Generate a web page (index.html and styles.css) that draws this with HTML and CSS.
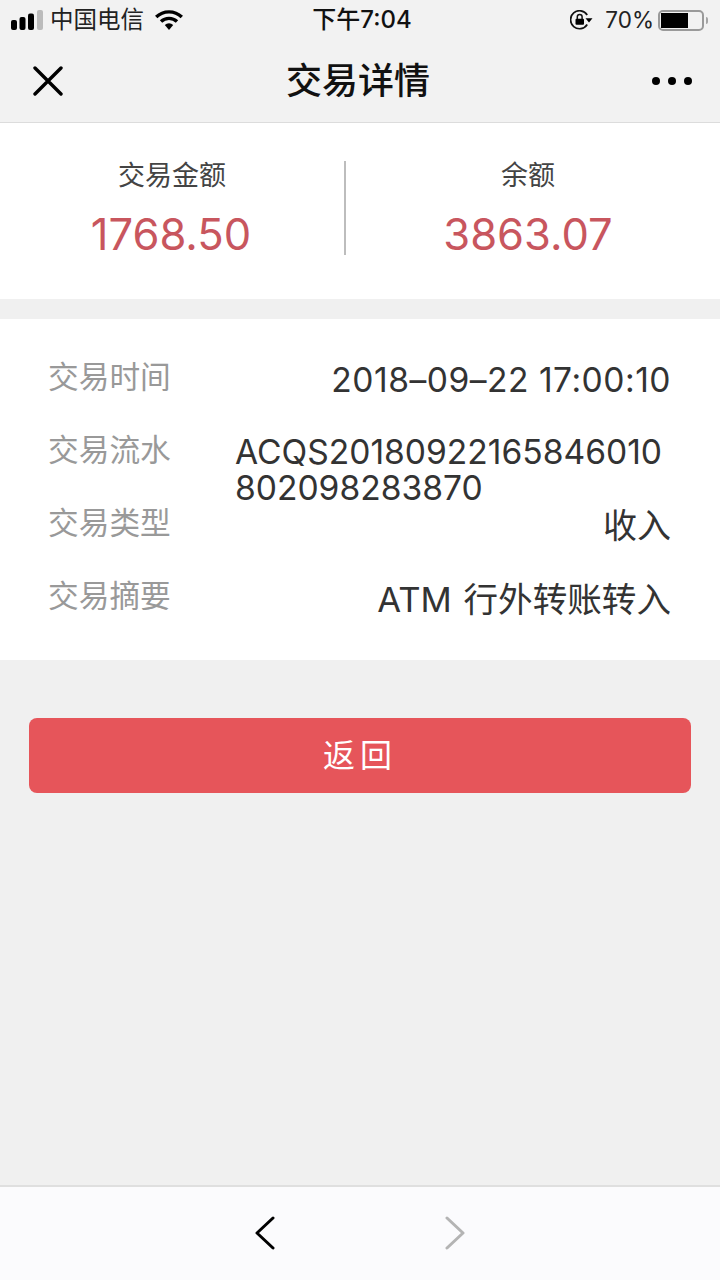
FILE: index.html
```html
<!DOCTYPE html>
<html lang="zh-CN">
<head>
<meta charset="utf-8">
<title>交易详情</title>
<link rel="stylesheet" href="styles.css">
</head>
<body>
<div class="page">
  <header class="top">
    <div class="status">
      <div class="status-left">
        <svg class="signal" width="32" height="20" viewBox="0 0 32 20"><rect x="0" y="10" width="6" height="10" rx="2"/><rect x="8.5" y="7" width="6" height="13" rx="2"/><rect x="17" y="3.5" width="6" height="16.5" rx="2"/><rect x="26" y="0" width="6" height="20" rx="2" fill="#bbb"/></svg>
        <span class="carrier">中国电信</span>
        <svg class="wifi" width="28" height="20" viewBox="0 0 28 20"><path d="M1.2 7a18.5 18.5 0 0 1 25.6 0" fill="none" stroke="#000" stroke-width="3.4"/><path d="M6 11.6a11.6 11.6 0 0 1 16 0" fill="none" stroke="#000" stroke-width="3.4"/><path d="M9.8 15a6.2 6.2 0 0 1 8.4 0L14 20z"/></svg>
      </div>
      <div class="clock">下午7:04</div>
      <div class="status-right">
        <svg class="lock" width="23" height="20" viewBox="0 0 23 20"><path d="M17.2 14.5A9 9 0 1 1 17.2 5" fill="none" stroke="#111" stroke-width="1.7"/><path d="M15.5 8.2h7l-3.500 4.300z"/><rect x="5.500" y="8.700" width="8.500" height="6" rx="1"/><path d="M7.300 9V6.800a2.400 2.400 0 0 1 4.800 0V9" fill="none" stroke="#111" stroke-width="1.500"/></svg>
        <span class="percent">70%</span>
        <div class="battery"><div class="battery-fill"></div></div>
        <div class="battery-tip"></div>
      </div>
    </div>
    <div class="nav">
      <svg class="close" width="30" height="30" viewBox="0 0 30 30"><path d="M2 2l26 26M28 2L2 28" stroke="#000" stroke-width="3.4" stroke-linecap="round"/></svg>
      <h1 class="title">交易详情</h1>
      <div class="more"><i></i><i></i><i></i></div>
    </div>
  </header>

  <section class="summary">
    <div class="sum-col">
      <div class="sum-label">交易金额</div>
      <div class="sum-value sum-value-left">1768.50</div>
    </div>
    <div class="sum-col sum-col-right">
      <div class="sum-label">余额</div>
      <div class="sum-value">3863.07</div>
    </div>
  </section>

  <section class="detail">
    <div class="row">
      <div class="key">交易时间</div>
      <div class="val val-date">2018–09–22 17:00:10</div>
    </div>
    <div class="row">
      <div class="key">交易流水</div>
      <div class="val val-long">ACQS20180922165846010802098283870</div>
    </div>
    <div class="row">
      <div class="key">交易类型</div>
      <div class="val val-cjk">收入</div>
    </div>
    <div class="row">
      <div class="key">交易摘要</div>
      <div class="val val-cjk val-note">ATM 行外转账转入</div>
    </div>
  </section>

  <div class="action"><button class="back" type="button">返回</button></div>

  <footer class="toolbar">
    <svg width="22" height="34" viewBox="0 0 22 34"><path d="M19 2L3 17l16 15" fill="none" stroke="#000" stroke-width="3" stroke-linecap="round" stroke-linejoin="round"/></svg>
    <svg width="22" height="34" viewBox="0 0 22 34"><path d="M3 2l16 15L3 32" fill="none" stroke="#b4b4b4" stroke-width="3" stroke-linecap="round" stroke-linejoin="round"/></svg>
  </footer>
</div>
</body>
</html>
```
FILE: styles.css
```css
* { box-sizing: border-box; }
html, body { margin: 0; padding: 0; }
body {
  width: 720px;
  height: 1280px;
  overflow: hidden;
  background: #f0f0f0;
  font-family: Inter, "Noto Sans CJK SC", sans-serif;
  color: #333;
}
.page { height: 1280px; display: flex; flex-direction: column; }

.top { height: 123px; background: #f2f2f2; border-bottom: 1px solid #dcdcdc; flex: none; }
.status { height: 40px; padding: 0 12px 0 11px; display: flex; align-items: center; justify-content: space-between; position: relative; }
.status-left, .status-right { display: flex; align-items: center; }
.carrier { font-size: 23.500px; line-height: 30px; color: #222; margin-left: 7px; }
.wifi { margin-left: 11px; }
.clock { position: absolute; left: 0; right: 0; top: 5px; text-align: center; font-size: 24px; line-height: 30px; font-weight: 500; color: #111; padding-left: 4px; }
.lock { margin-right: 12px; }
.percent { font-size: 22.500px; line-height: 30px; color: #222; margin-right: 4px; }
.battery { width: 46px; height: 21px; border: 2px solid #9a9a9a; border-radius: 5px; padding: 1px; }
.battery-fill { width: 27px; height: 15px; background: #000; }
.battery-tip { width: 2px; height: 7px; background: #a5a5a5; border-radius: 0 2px 2px 0; margin-left: 2px; }

.nav { height: 82px; padding: 0 28px 0 33px; display: flex; align-items: center; justify-content: space-between; position: relative; }
.title { position: absolute; left: 0; right: 0; top: 19px; margin: 0; text-align: center; font-size: 36px; line-height: 44px; font-weight: 500; color: #111; padding-right: 4px; }
.more { display: flex; gap: 8px; }
.more i { width: 8px; height: 8px; border-radius: 50%; background: #000; display: block; }

.summary { height: 176px; background: #fff; flex: none; padding-top: 38px; display: flex; align-items: flex-start; }
.sum-col { width: 344px; height: 94px; text-align: center; }
.sum-col-right { width: 376px; border-left: 2px solid #bdbdbd; padding-right: 10px; }
.sum-label { font-size: 27px; line-height: 30px; color: #444; }
.sum-value { font-size: 43.500px; line-height: 50px; color: #c8565e; margin-top: 18px; }
.sum-value-left { padding-right: 2px; }

.detail { margin-top: 20px; height: 341px; background: #fff; padding: 22px 49px 0; flex: none; }
.row { display: flex; justify-content: space-between; height: 73px; }
.key { font-size: 30.700px; line-height: 73px; color: #999; flex: none; white-space: nowrap; width: 186px; height: 73px; margin: -1px 0 0 -1px; }
.val { font-size: 33.600px; line-height: 36px; color: #333; text-align: right; padding: 20px 0 0; flex: 1; }
.val-date { letter-spacing: 0.500px; padding-top: 21px; }
.val-cjk { font-size: 34px; padding-top: 21px; }
.val-note { font-size: 34.600px; word-spacing: 2px; }
.val-long { text-align: left; word-break: break-all; width: 436px; flex: none; }

.action { padding: 58px 29px 0; flex: 1; }
.back { display: block; width: 100%; height: 75px; background: #e6555a; color: #fff; border: 0; border-radius: 8px; font: inherit; font-size: 32px; line-height: 75px; letter-spacing: 5px; padding: 0; }

.toolbar { height: 95px; flex: none; background: #fbfbfd; border-top: 2px solid #dfdfdf; display: flex; justify-content: center; align-items: center; gap: 168px; padding-bottom: 1px; }
```
